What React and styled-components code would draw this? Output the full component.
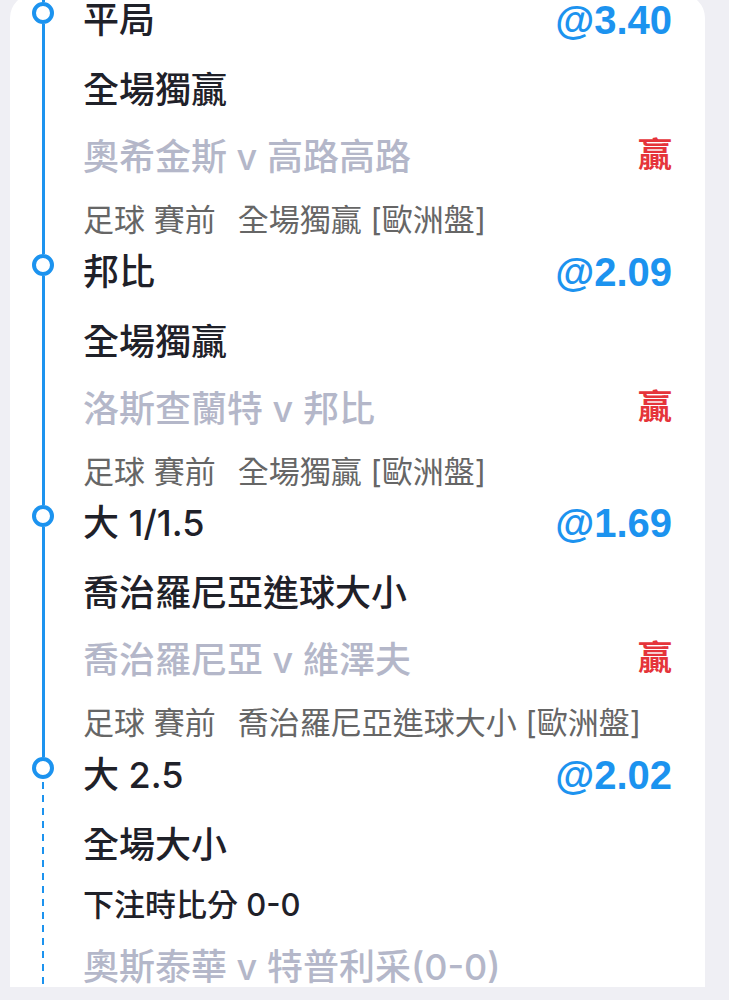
import React from "react";
import styled, { createGlobalStyle } from "styled-components";

const GlobalStyle = createGlobalStyle`
  html, body {
    margin: 0;
    padding: 0;
    background: #efeff4;
    height: 1000px;
    overflow: hidden;
  }
  body {
    font-family: Inter, "Noto Sans CJK TC", sans-serif;
  }
`;

const BLUE = "#1c93ef";

const bets = [
  {
    pick: "平局",
    odds: "@3.40",
    market: "全場獨贏",
    match: "奧希金斯 v 高路高路",
    result: "贏",
    sport: "足球 賽前",
    detail: "全場獨贏 [歐洲盤]",
  },
  {
    pick: "邦比",
    odds: "@2.09",
    market: "全場獨贏",
    match: "洛斯查蘭特 v 邦比",
    result: "贏",
    sport: "足球 賽前",
    detail: "全場獨贏 [歐洲盤]",
  },
  {
    pick: "大 1/1.5",
    odds: "@1.69",
    market: "喬治羅尼亞進球大小",
    match: "喬治羅尼亞 v 維澤夫",
    result: "贏",
    sport: "足球 賽前",
    detail: "喬治羅尼亞進球大小 [歐洲盤]",
  },
  {
    pick: "大 2.5",
    odds: "@2.02",
    market: "全場大小",
    score: "下注時比分 0-0",
    match: "奧斯泰華 v 特普利采(0-0)",
    pending: true,
  },
];

const App = () => {
  return (
    <>
      <GlobalStyle />
      <Card>
        {bets.map((bet, i) => {
          const top = i === 0 ? 11 : 21.5;
          return (
            <Item key={i}>
              <Gutter>
                <Segment style={{ height: top - 3 }} />
                <Dot />
                <Segment $grow $dashed={bet.pending} />
              </Gutter>
              <Content $top={top}>
                <TitleRow>
                  <Pick>{bet.pick}</Pick>
                  <Odds>{bet.odds}</Odds>
                </TitleRow>
                <Market>{bet.market}</Market>
                {bet.score && <Score>{bet.score}</Score>}
                <MatchRow>
                  <Match>{bet.match}</Match>
                  {bet.result && <Result>{bet.result}</Result>}
                </MatchRow>
                {bet.sport && (
                  <Meta>
                    {bet.sport}
                    <MetaDetail>{bet.detail}</MetaDetail>
                  </Meta>
                )}
              </Content>
            </Item>
          );
        })}
      </Card>
    </>
  );
};

const Card = styled.div`
  margin: -6px 24px 0 10px;
  background: #ffffff;
  border-radius: 24px 24px 0 0;
`;

const Item = styled.div`
  display: flex;
`;

const Gutter = styled.div`
  width: 66px;
  flex-shrink: 0;
  display: flex;
  flex-direction: column;
  align-items: center;
`;

const Segment = styled.div`
  width: 3px;
  flex: ${(p) => (p.$grow ? "1 1 auto" : "none")};
  background: ${(p) =>
    p.$dashed
      ? `repeating-linear-gradient(to bottom, ${BLUE} 0 7px, transparent 7px 13px)`
      : BLUE};
  ${(p) => p.$dashed && "width: 2px; margin-top: 3px;"}
`;

const Dot = styled.div`
  flex: 0 0 22px;
  width: 22px;
  height: 22px;
  box-sizing: border-box;
  border: 4.5px solid ${BLUE};
  border-radius: 50%;
  background: #ffffff;
`;

const Content = styled.div`
  flex: 1;
  min-width: 0;
  padding: ${(p) => p.$top}px 33px 0 7px;
`;

const TitleRow = styled.div`
  display: flex;
  justify-content: space-between;
  align-items: center;
  height: 30px;
`;

const Pick = styled.div`
  font-size: 36px;
  line-height: 30px;
  font-weight: 500;
  color: #1f2129;
`;

const Odds = styled.div`
  font-family: "Liberation Sans", sans-serif;
  font-size: 40px;
  line-height: 30px;
  font-weight: 700;
  color: ${BLUE};
`;

const Market = styled.div`
  margin-top: 35px;
  font-size: 36px;
  line-height: 40px;
  font-weight: 500;
  color: #1f2129;
`;

const Score = styled.div`
  margin-top: 25px;
  font-size: 31px;
  line-height: 30px;
  font-weight: 500;
  color: #1f2129;
`;

const MatchRow = styled.div`
  display: flex;
  justify-content: space-between;
  align-items: center;
  margin-top: 27px;
  height: 40px;
`;

const Match = styled.div`
  font-size: 36px;
  line-height: 40px;
  font-weight: 500;
  color: #b4b7c9;
  white-space: nowrap;
`;

const Result = styled.div`
  font-size: 34px;
  line-height: 40px;
  font-weight: 700;
  color: #e5343a;
  margin-top: -4px;
`;

const Meta = styled.div`
  margin-top: 28px;
  font-size: 31px;
  line-height: 30px;
  color: #666666;
  white-space: nowrap;
`;

const MetaDetail = styled.span`
  margin-left: 22px;
`;

export default App;
